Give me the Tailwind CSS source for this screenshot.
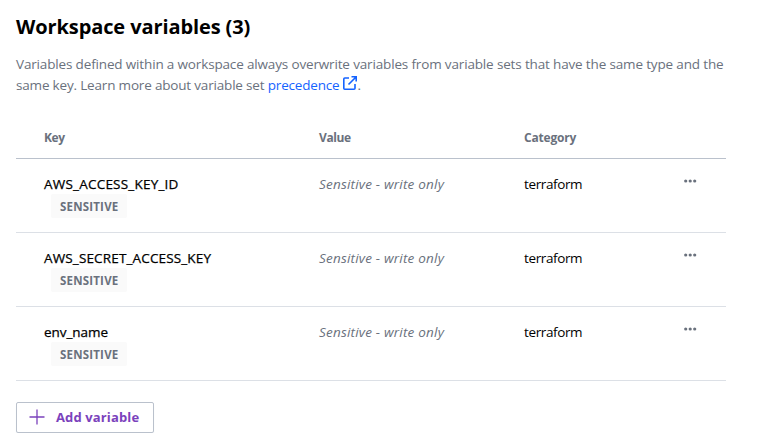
<!DOCTYPE html>
<html lang="en">
<head>
<meta charset="utf-8">
<title>Workspace variables</title>
<script src="https://cdn.jsdelivr.net/npm/@tailwindcss/browser@4"></script>
</head>
<body class="bg-white font-['Open_Sans','Noto_Sans',sans-serif] text-black">
<main class="w-[726px] pl-4 pt-[11px]">
  <h1 class="h-8 text-[20px] leading-8 font-bold tracking-[-0.1px] whitespace-nowrap">Workspace variables (3)</h1>
  <p class="mt-[11px] text-[13.5px] leading-[21px] tracking-[-0.155px] text-[#6a717d] whitespace-nowrap">
    Variables defined within a workspace always overwrite variables from variable sets that have the same type and the<br>
    <span class="tracking-[-0.18px]">same key. Learn more about variable set <a class="text-[#1563ff]">precedence<svg class="ml-[3px] mr-px -mt-[6px] inline-block h-[14px] w-[14px] align-middle" viewBox="0 0 14 14" fill="none" stroke="currentColor" stroke-width="1.6"><path d="M6 2H1.8Q.8 2 .8 3V12.2Q.8 13.2 1.8 13.2H11Q12 13.2 12 12.2V8M8.5.8H13.2V5.5M13 1L5.5 8.5"/></svg></a>.</span>
  </p>
  <table class="mt-[22px] w-[710px] table-fixed border-collapse text-left text-[13.5px]">
    <colgroup><col class="w-[275px]"><col class="w-[205px]"><col class="w-[160px]"><col></colgroup>
    <thead>
      <tr class="h-10 border-b border-[#bac1cc] text-xs text-[#6a717d]">
        <th class="pl-7 pt-px font-bold tracking-[-0.35px]">Key</th><th class="pl-7 pt-px font-bold tracking-[-0.4px]">Value</th><th class="pl-7 pt-px font-bold tracking-[-0.2px]">Category</th><th></th>
      </tr>
    </thead>
    <tbody id="rows"></tbody>
  </table>
  <button class="mt-[21px] flex h-[31px] w-[138px] items-center rounded-[2px] border border-[#bac1cc] pl-3 text-[13px] font-bold tracking-[0.13px] whitespace-nowrap text-[#7b42bc] shadow-[0_3px_1px_#ebeef2]">
    <svg class="mr-[11px] h-4 w-4 shrink-0" viewBox="0 0 16 16" fill="none" stroke="currentColor" stroke-width="1.3"><path d="M.5 8H15.5M8 .5V15.5"/></svg><span class="pt-[2px]">Add variable</span>
  </button>
</main>
<script>
const keys = [
  ['AWS_ACCESS_KEY_ID', 'tracking-[0.22px]'],
  ['AWS_SECRET_ACCESS_KEY', 'tracking-[0.15px]'],
  ['env_name', 'tracking-[-0.05px]']
];
document.getElementById('rows').innerHTML = keys.map(([key, tracking]) => `
  <tr class="h-[74px] border-b border-[#dce0e6] align-top leading-5">
    <td class="pt-[15px] pl-7"><div class="h-5 whitespace-nowrap [-webkit-text-stroke:0.25px_black] ${tracking}">${key}</div>
      <div class="ml-[7px] h-6 w-[76px] rounded-[2px] bg-[#fafafa] pt-px pl-[9px] text-[11.5px] leading-6 font-bold tracking-[0.2px] text-[#6a717d]">SENSITIVE</div></td>
    <td class="pt-[15px] pl-7 tracking-[0.2px] text-[#6a717d] italic">Sensitive - write only</td>
    <td class="pt-[15px] pl-7 tracking-[-0.38px]">terraform</td>
    <td class="pt-5 pl-7"><svg class="h-[4px] w-[13px]" viewBox="0 0 13 4" fill="#6a717d"><circle cx="1.7" cy="2" r="1.6"/><circle cx="6.2" cy="2" r="1.6"/><circle cx="10.7" cy="2" r="1.6"/></svg></td>
  </tr>`).join('');
</script>
</body>
</html>
